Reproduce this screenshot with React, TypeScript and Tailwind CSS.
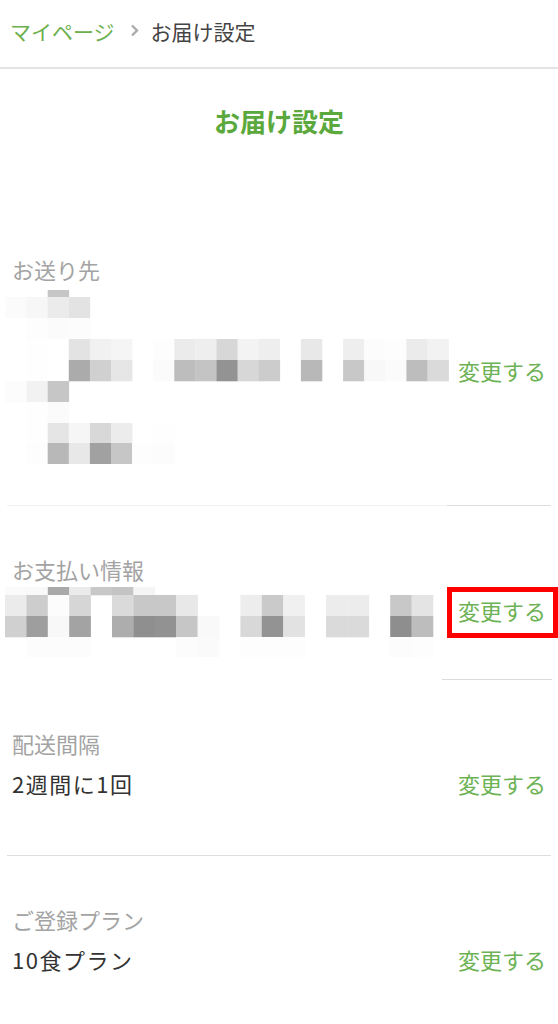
import React from "react";

type Cell = [number, string];

// Redacted (pixelated) blocks copied cell by cell from the screenshot.
const ADDRESS_ROWS: { y: number; h: number; cells: Cell[] }[] = [
  { y: 0, h: 7, cells: [[2, "#c6c6c6"]] },
  { y: 7, h: 21, cells: [[0, "#fbfbfb"], [1, "#f7f7f7"], [2, "#ebebeb"], [3, "#e3e3e3"]] },
  { y: 28, h: 21, cells: [[1, "#fdfdfd"], [2, "#fbfbfb"], [3, "#fcfcfc"]] },
  {
    y: 49,
    h: 21,
    cells: [
      [1, "#fefefe"], [3, "#e3e3e3"], [4, "#f1f1f1"], [5, "#f5f5f5"], [7, "#fdfdfd"],
      [8, "#ebebeb"], [9, "#eeeeee"], [10, "#d7d7d7"], [11, "#f3f3f3"], [12, "#eeeeee"],
      [14, "#e8e8e8"], [16, "#eeeeee"], [17, "#fcfcfc"], [18, "#fdfdfd"], [19, "#ebebeb"],
      [20, "#f2f2f2"],
    ],
  },
  {
    y: 70,
    h: 21,
    cells: [
      [1, "#fefefe"], [3, "#ababab"], [4, "#d0d0d0"], [5, "#e6e6e6"], [7, "#fbfbfb"],
      [8, "#bdbdbd"], [9, "#c4c4c4"], [10, "#939393"], [11, "#d7d7d7"], [12, "#cccccc"],
      [14, "#b8b8b8"], [16, "#c8c8c8"], [17, "#f8f8f8"], [18, "#fbfbfb"], [19, "#bdbdbd"],
      [20, "#dadada"],
    ],
  },
  { y: 91, h: 21, cells: [[0, "#fcfcfc"], [1, "#f2f2f2"], [2, "#c6c6c6"]] },
  { y: 112, h: 21, cells: [[1, "#fefefe"], [2, "#fbfbfb"]] },
  {
    y: 133,
    h: 20,
    cells: [[1, "#fefefe"], [2, "#e5e5e5"], [3, "#f6f6f6"], [4, "#d8d8d8"], [5, "#ececec"], [7, "#fefefe"]],
  },
  {
    y: 153,
    h: 21,
    cells: [
      [1, "#fdfdfd"], [2, "#b8b8b8"], [3, "#e8e8e8"], [4, "#a1a1a1"], [5, "#c6c6c6"],
      [6, "#fdfdfd"], [7, "#fcfcfc"],
    ],
  },
];

const PAYMENT_ROWS: { y: number; h: number; cells: Cell[] }[] = [
  {
    y: 0,
    h: 8,
    cells: [[0, "#fafafa"], [1, "#f9f9f9"], [2, "#a9a9a9"], [3, "#ebebeb"], [4, "#c8c8c8"], [5, "#c4c4c4"], [6, "#f5f5f5"]],
  },
  {
    y: 8,
    h: 21,
    cells: [
      [0, "#ebebeb"], [1, "#cdcdcd"], [2, "#fcfcfc"], [3, "#d6d6d6"], [5, "#dadada"],
      [6, "#c8c8c8"], [7, "#c8c8c8"], [8, "#e8e8e8"], [11, "#ededed"], [12, "#cacaca"],
      [13, "#f0f0f0"], [15, "#ececec"], [16, "#ececec"], [18, "#c8c8c8"], [19, "#e4e4e4"],
    ],
  },
  {
    y: 29,
    h: 21,
    cells: [
      [0, "#d0d0d0"], [1, "#9e9e9e"], [2, "#f8f8f8"], [3, "#a3a3a3"], [5, "#adadad"],
      [6, "#8f8f8f"], [7, "#929292"], [8, "#c6c6c6"], [9, "#f9f9f9"], [11, "#d8d8d8"],
      [12, "#939393"], [13, "#e2e2e2"], [15, "#dadada"], [16, "#dadada"], [18, "#8e8e8e"],
      [19, "#bdbdbd"],
    ],
  },
  {
    y: 50,
    h: 20,
    cells: [
      [1, "#fcfcfc"], [2, "#fcfcfc"], [3, "#fcfcfc"], [8, "#fcfcfc"], [9, "#fafafa"],
      [11, "#fdfdfd"], [12, "#fdfdfd"], [13, "#fdfdfd"], [18, "#fcfcfc"], [19, "#fdfdfd"],
    ],
  },
];

function Mosaic({
  rows,
  x0,
  size,
  width,
  height,
}: {
  rows: { y: number; h: number; cells: Cell[] }[];
  x0: number;
  size: number;
  width: number;
  height: number;
}) {
  return (
    <svg width={width} height={height} viewBox={`0 0 ${width} ${height}`} className="shrink-0">
      {rows.map((row) =>
        row.cells.map(([col, fill]) => (
          <rect
            key={`${row.y}-${col}`}
            x={x0 + col * size}
            y={row.y}
            width={size + 0.3}
            height={row.h + 0.3}
            fill={fill}
          />
        )),
      )}
    </svg>
  );
}

function Label({ children, className = "" }: { children: React.ReactNode; className?: string }) {
  return <p className={`pl-[12px] leading-[30px] text-[#a3a3a3] ${className}`}>{children}</p>;
}

function ChangeLink() {
  return <span className="leading-[30px] text-[#6db254]">変更する</span>;
}

export default function App() {
  return (
    <main className="min-h-[1024px] w-full bg-white text-[22px] font-['Noto_Sans_CJK_JP','Noto_Sans',sans-serif]">
      <nav className="flex h-[69px] items-center border-b-2 border-[#e3e3e3] pb-[6px] pl-[10px] text-[21px] leading-[30px]">
        <span className="text-[#6cb04e]">マイページ</span>
        <svg className="ml-[15px] mr-[12px] h-[13px] w-[9px]" viewBox="0 0 9 13">
          <path d="M2 1.5 7 6.5 2 11.5" fill="none" stroke="#aaaaaa" strokeWidth="2.4" />
        </svg>
        <span className="text-[#444]">お届け設定</span>
      </nav>

      <h1 className="mt-[34px] text-center text-[26px] font-bold leading-[36px] text-[#5ba93d]">
        お届け設定
      </h1>

      {/* お送り先 */}
      <section className="mt-[115px]">
        <Label>お送り先</Label>
        <div className="mt-[6px] flex items-start justify-between pr-[12px]">
          <Mosaic rows={ADDRESS_ROWS} x0={5.5} size={21.1} width={450} height={174} />
          <div className="mt-[64px]">
            <ChangeLink />
          </div>
        </div>
        <div className="mx-[7px] mt-[41px] flex h-px">
          <div className="flex-1 bg-[#f3f3f3]" />
          <div className="w-[104px] bg-[#dcdcdc]" />
        </div>
      </section>

      {/* お支払い情報 */}
      <section>
        <Label className="mt-[48px]">お支払い情報</Label>
        <div className="mt-[3px] flex items-start justify-between">
          <Mosaic rows={PAYMENT_ROWS} x0={5} size={21.4} width={440} height={70} />
          <div className="flex h-[51px] w-[111px] items-center border-[5px] border-[#ff0000] pb-[6px] pl-[6px]">
            <ChangeLink />
          </div>
        </div>
        <div className="ml-auto mr-[6px] mt-[22px] h-px w-[110px] bg-[#dcdcdc]" />
      </section>

      {/* 配送間隔 */}
      <section>
        <Label className="mt-[48px]">配送間隔</Label>
        <div className="mt-[10px] flex items-center justify-between px-[12px] leading-[30px]">
          <span className="tracking-[1.5px] text-[#333]">2週間に1回</span>
          <ChangeLink />
        </div>
        <div className="mx-[7px] mt-[57px] h-px bg-[#dedede]" />
      </section>

      {/* ご登録プラン */}
      <section>
        <Label className="mt-[48px]">ご登録プラン</Label>
        <div className="mt-[10px] flex items-center justify-between px-[12px] leading-[30px]">
          <span className="tracking-[1.5px] text-[#333]">10食プラン</span>
          <ChangeLink />
        </div>
      </section>
    </main>
  );
}
